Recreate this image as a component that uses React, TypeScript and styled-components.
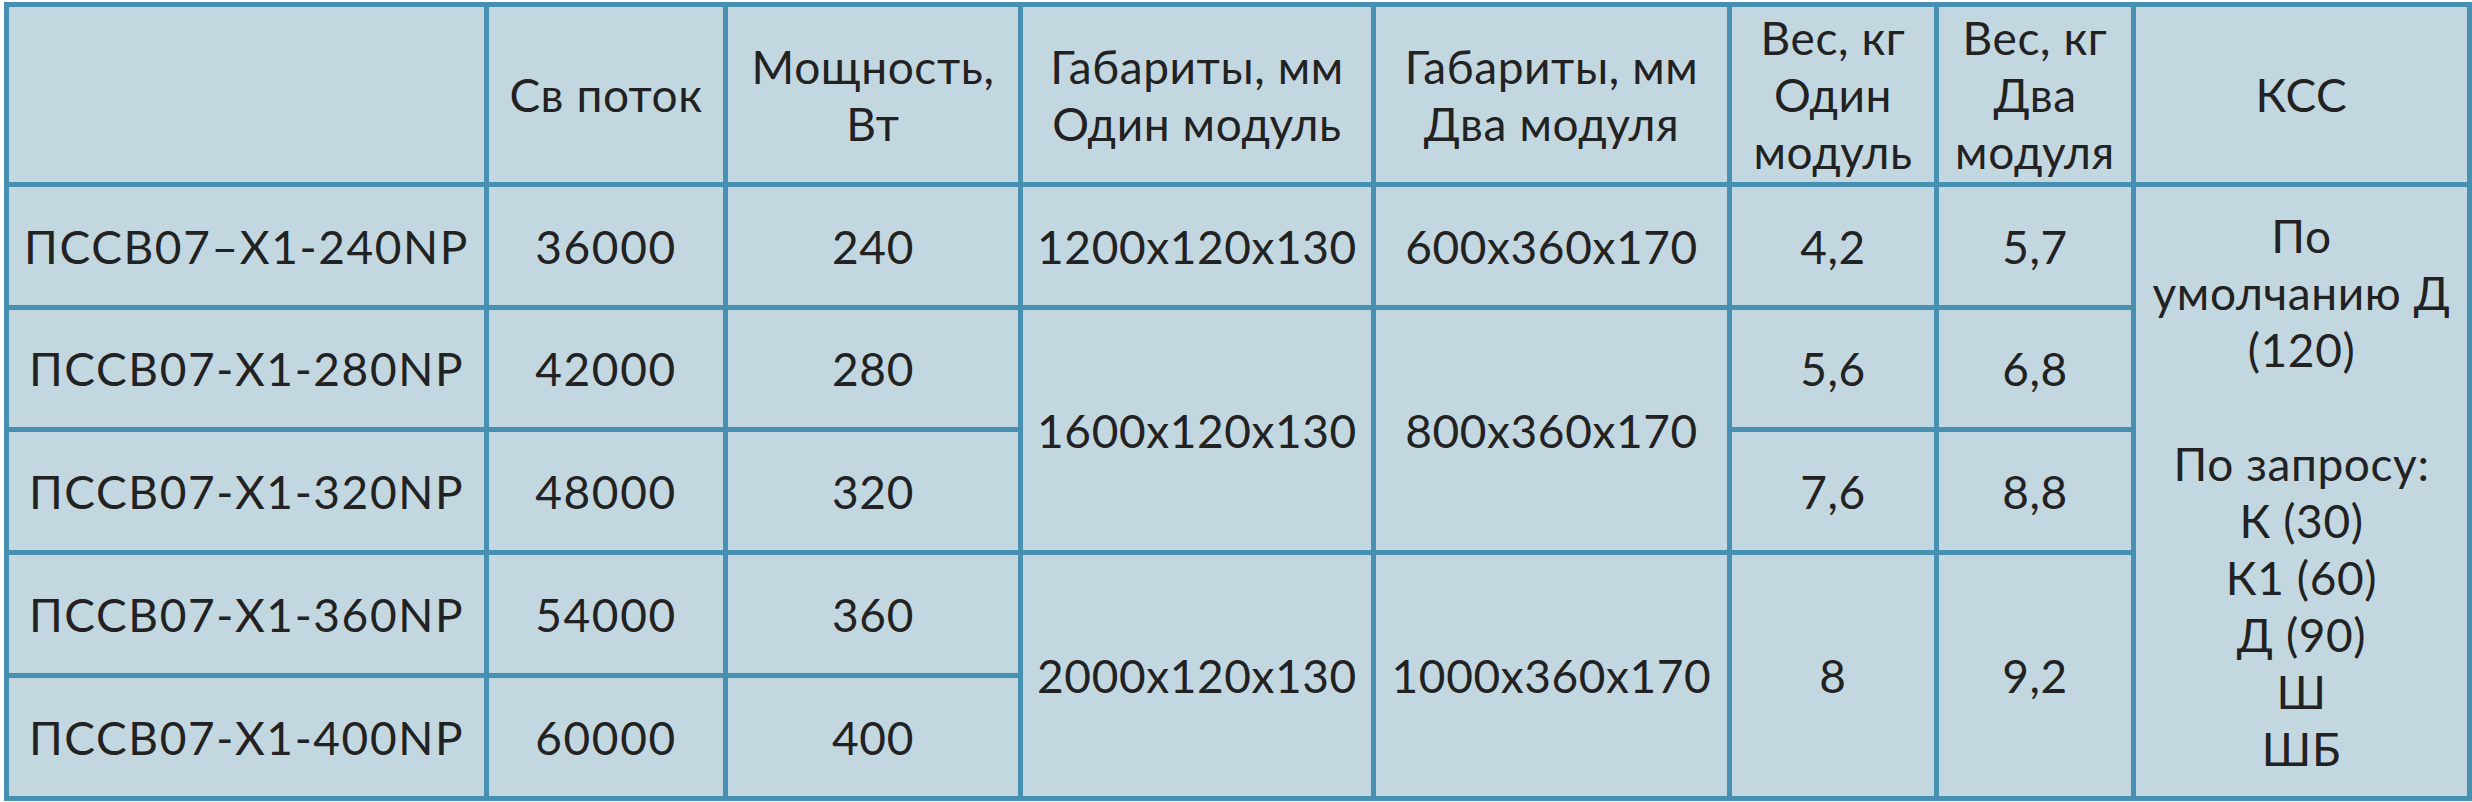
import React from "react";
import styled, { createGlobalStyle } from "styled-components";

const GlobalStyle = createGlobalStyle`
  html, body {
    margin: 0;
    padding: 0;
    background: #ffffff;
  }
  body {
    font-family: Lato, "Open Sans", "Noto Sans", sans-serif;
  }
`;

const LINE = "#4890b1";
const FILL = "#c3d7e0";

// Рамка таблицы: фон сетки = цвет линий, зазоры рисуют линии
const Frame = styled.div`
  margin: 2px 0 0 4px;
  width: 2468px;
  box-sizing: border-box;
  padding: 5px;
  background: ${LINE};
`;

const Grid = styled.div`
  display: grid;
  grid-template-columns: 475px 234px 290px 348px 351px 202px 192px 331px;
  grid-template-rows: 175px 118px 117px 118px 118px 118px;
  gap: 5px;
`;

const Cell = styled.div<{ $col: number; $row: number; $rows?: number; $wide?: boolean }>`
  grid-column: ${(p) => p.$col};
  grid-row: ${(p) => p.$row} / span ${(p) => p.$rows ?? 1};
  background: ${FILL};
  display: flex;
  align-items: center;
  justify-content: center;
  text-align: center;
  white-space: pre-line;
  font-size: 46px;
  line-height: 57px;
  font-weight: 400;
  letter-spacing: ${(p) => (p.$wide ? "1.6px" : "0.6px")};
  color: #222222;
`;

type Item = { t: string; c: number; r: number; s?: number };

const header: string[] = [
  "",
  "Св поток",
  "Мощность,\nВт",
  "Габариты, мм\nОдин модуль",
  "Габариты, мм\nДва модуля",
  "Вес, кг\nОдин\nмодуль",
  "Вес, кг\nДва\nмодуля",
  "КСС",
];

const models = [
  ["ПССВ07–X1-240NP", "36000", "240"],
  ["ПССВ07-X1-280NP", "42000", "280"],
  ["ПССВ07-X1-320NP", "48000", "320"],
  ["ПССВ07-X1-360NP", "54000", "360"],
  ["ПССВ07-X1-400NP", "60000", "400"],
];

const merged: Item[] = [
  { t: "1200x120x130", c: 4, r: 2 },
  { t: "600x360x170", c: 5, r: 2 },
  { t: "4,2", c: 6, r: 2 },
  { t: "5,7", c: 7, r: 2 },
  { t: "1600x120x130", c: 4, r: 3, s: 2 },
  { t: "800x360x170", c: 5, r: 3, s: 2 },
  { t: "5,6", c: 6, r: 3 },
  { t: "6,8", c: 7, r: 3 },
  { t: "7,6", c: 6, r: 4 },
  { t: "8,8", c: 7, r: 4 },
  { t: "2000x120x130", c: 4, r: 5, s: 2 },
  { t: "1000x360x170", c: 5, r: 5, s: 2 },
  { t: "8", c: 6, r: 5, s: 2 },
  { t: "9,2", c: 7, r: 5, s: 2 },
  {
    t: "По\nумолчанию Д\n(120)\n\u00a0\nПо запросу:\nК (30)\nК1 (60)\nД (90)\nШ\nШБ",
    c: 8,
    r: 2,
    s: 5,
  },
];

export default function App() {
  const items: Item[] = [
    ...header.map((t, i) => ({ t, c: i + 1, r: 1 })),
    ...models.flatMap((m, i) => m.map((t, j) => ({ t, c: j + 1, r: i + 2 }))),
    ...merged,
  ];

  return (
    <>
      <GlobalStyle />
      <Frame>
        <Grid>
          {items.map((it, i) => (
            <Cell
              key={i}
              $col={it.c}
              $row={it.r}
              $rows={it.s}
              $wide={it.r > 1 && it.c <= 2}
            >
              {it.t}
            </Cell>
          ))}
        </Grid>
      </Frame>
    </>
  );
}
